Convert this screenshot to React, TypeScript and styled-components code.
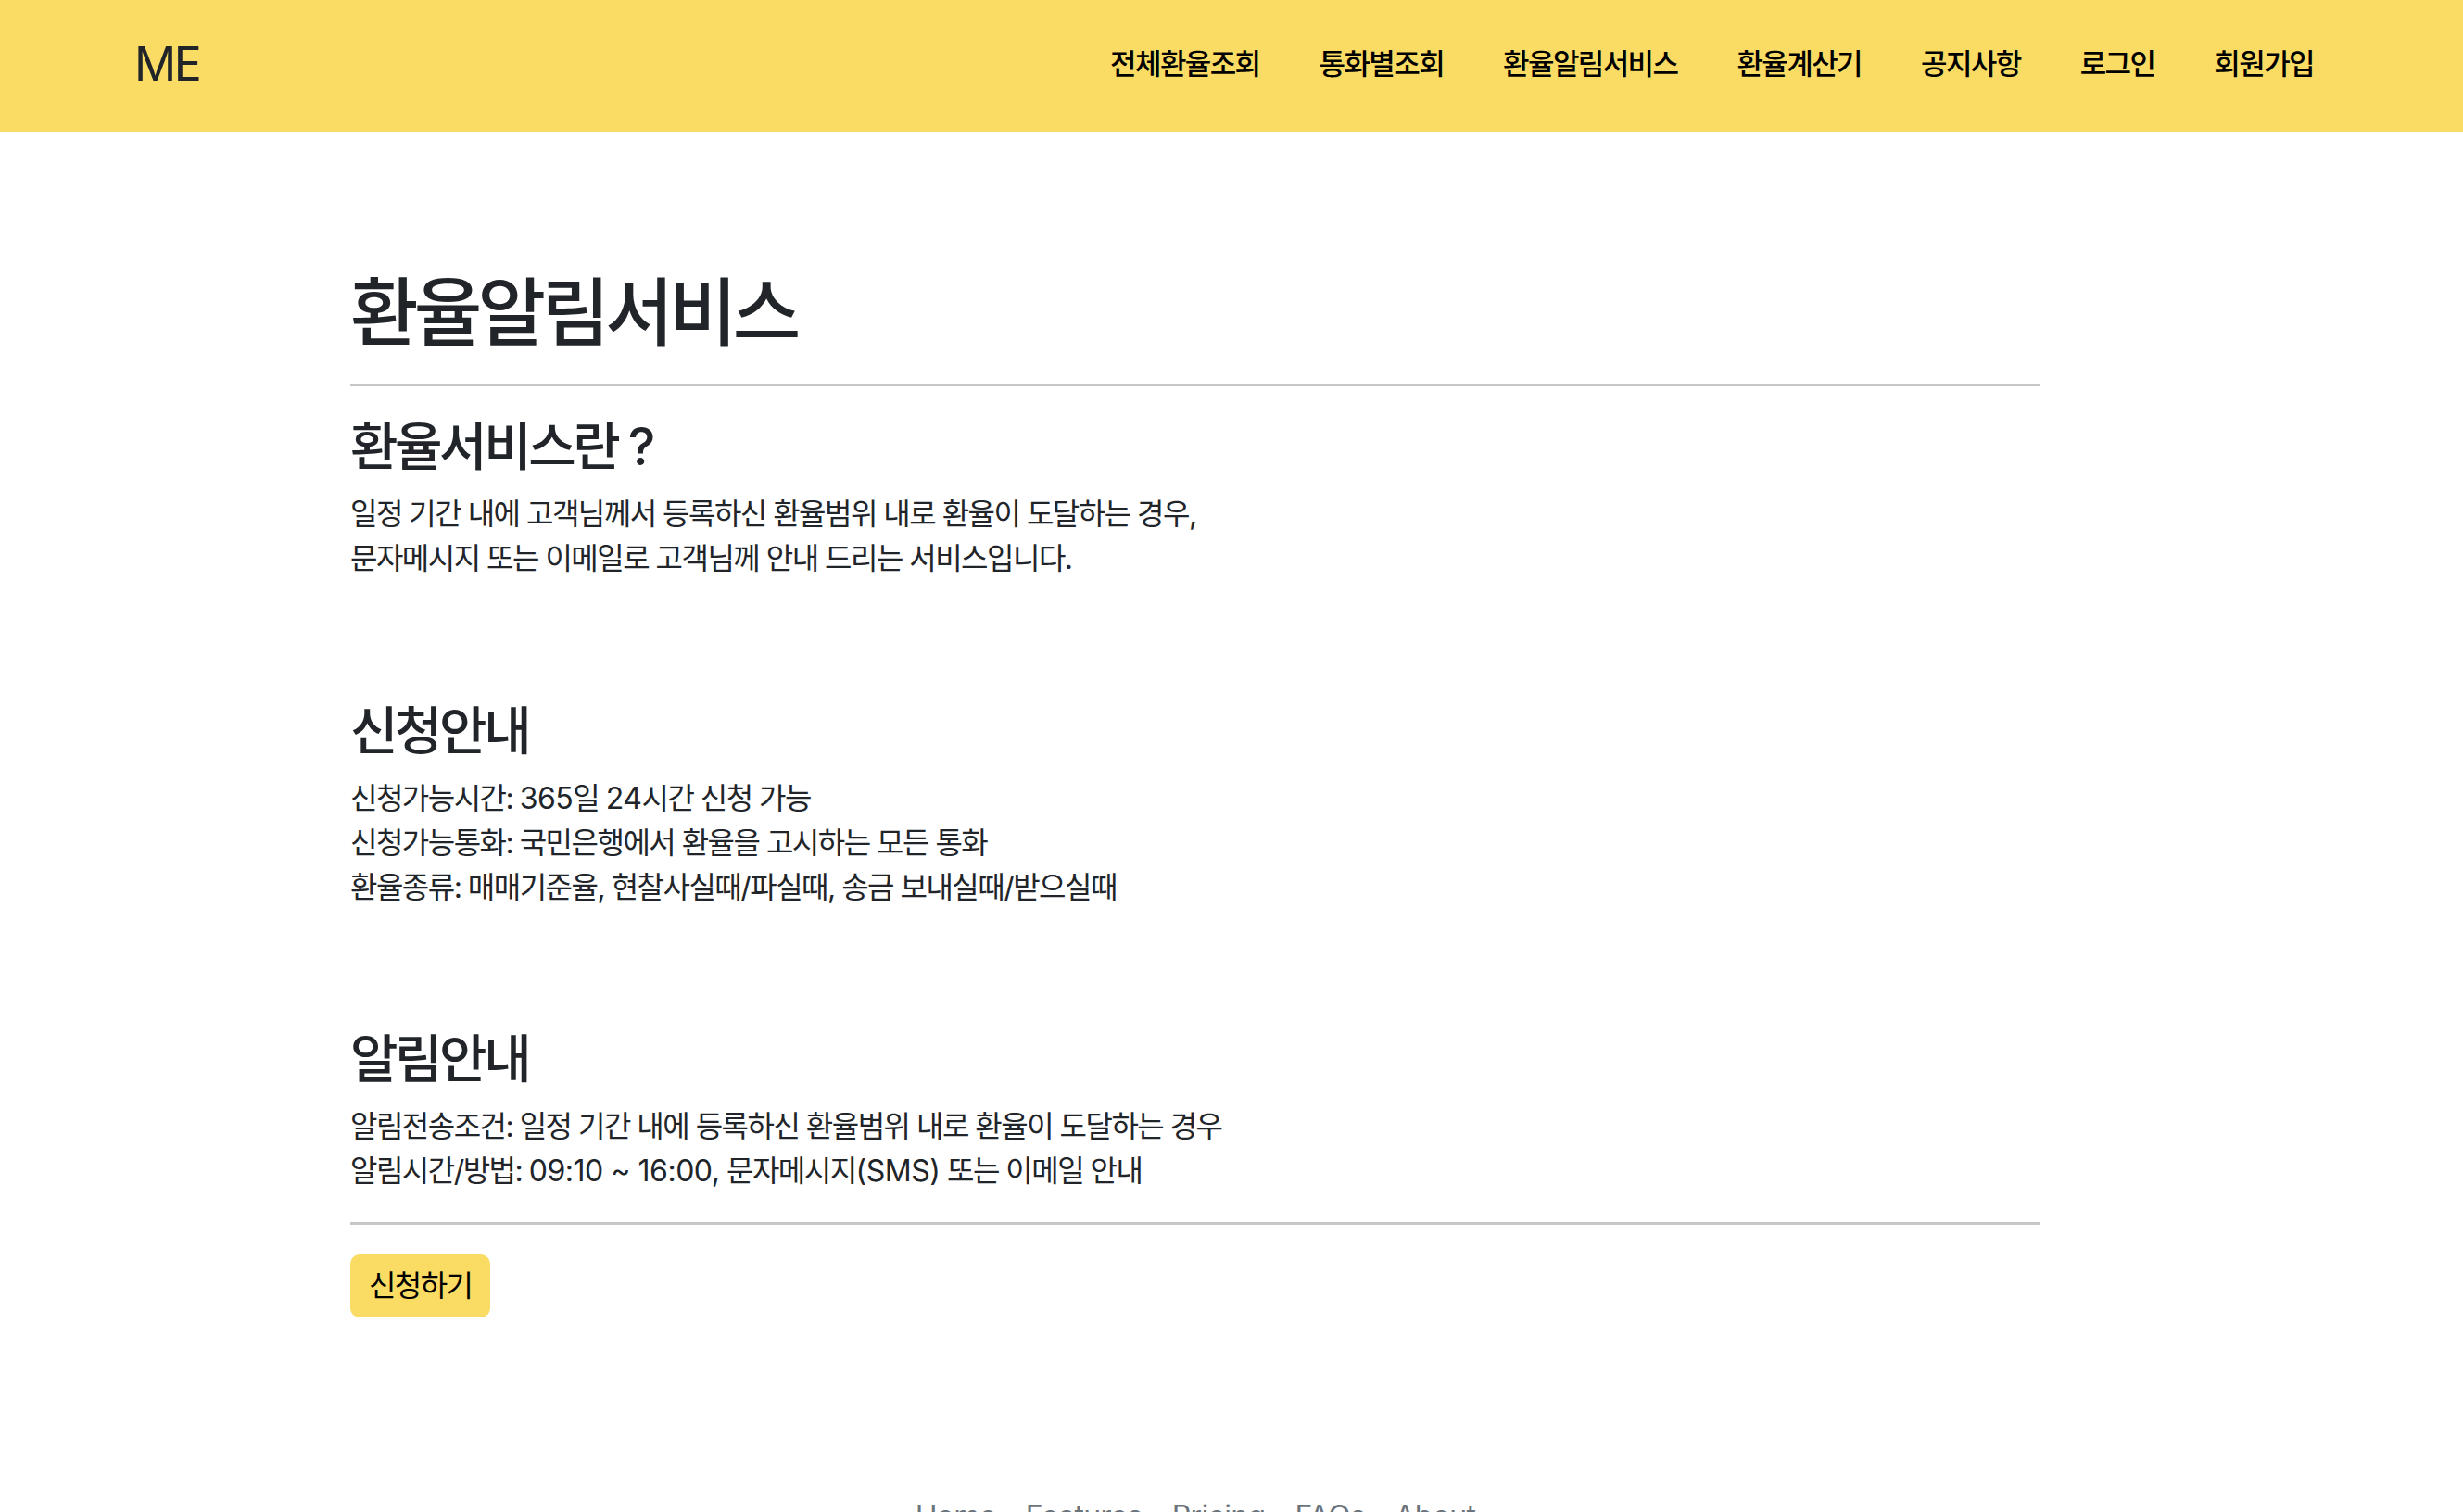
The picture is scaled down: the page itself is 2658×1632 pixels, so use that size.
import { createGlobalStyle } from "styled-components";
import styled from "styled-components";

const GlobalStyle = createGlobalStyle`
  html, body {
    margin: 0;
    padding: 0;
    height: 1632px;
    overflow: hidden;
    background: #ffffff;
  }
  body {
    font-family: Inter, "Noto Sans CJK KR", sans-serif;
    font-size: 32px;
    line-height: 48px;
    color: #212529;
  }
`;

const Header = styled.header`
  height: 142px;
  padding: 0 161px 4px 145px;
  box-sizing: border-box;
  background: #fadc64;
  display: flex;
  align-items: center;
  justify-content: space-between;
`;

const Brand = styled.a`
  font-size: 50px;
  font-weight: 400;
  letter-spacing: -0.05em;
  color: #212529;
`;

const NavList = styled.nav`
  display: flex;
  gap: 64px;
`;

const NavLink = styled.a`
  font-size: 31px;
  font-weight: 500;
  letter-spacing: -0.052em;
  color: #000000;
`;

const Main = styled.main`
  width: 1824px;
  margin-left: 378px;
  padding-top: 145px;
`;

const Title = styled.h1`
  margin: 0;
  font-size: 80px;
  line-height: 100px;
  font-weight: 500;
  letter-spacing: -0.06em;
`;

const Rule = styled.hr<{ $gap: number }>`
  margin: ${({ $gap }) => $gap}px 0 0;
  border: 0;
  border-top: 3px solid #c8c8c8;
`;

const Section = styled.section<{ $gap: number }>`
  margin-top: ${({ $gap }) => $gap}px;
`;

const Heading = styled.h3`
  margin: 0 0 15px;
  font-size: 56px;
  line-height: 67px;
  font-weight: 500;
  letter-spacing: -0.062em;
`;

const Line = styled.p`
  margin: 0;
  letter-spacing: -0.0475em;
`;

const Latin = styled.span`
  letter-spacing: -0.015em;
`;

const ApplyButton = styled.button`
  display: block;
  margin-top: 32px;
  padding: 10px 20px;
  border: 0;
  border-radius: 10px;
  background: #fadc64;
  color: #000000;
  font: inherit;
  letter-spacing: -0.05em;
`;

const Footer = styled.footer`
  width: 1824px;
  margin: 191px 0 0 378px;
  display: flex;
  justify-content: center;
  gap: 32px;
  color: #6c757d;
  letter-spacing: -0.02em;
`;

const navItems = ["전체환율조회", "통화별조회", "환율알림서비스", "환율계산기", "공지사항", "로그인", "회원가입"];
const footerItems = ["Home", "Features", "Pricing", "FAQs", "About"];

export default function App() {
  return (
    <>
      <GlobalStyle />
      <Header>
        <Brand>ME</Brand>
        <NavList>
          {navItems.map((item) => (
            <NavLink key={item}>{item}</NavLink>
          ))}
        </NavList>
      </Header>
      <Main>
        <Title>환율알림서비스</Title>
        <Rule $gap={27} />
        <Section $gap={32}>
          <Heading>환율서비스란 ?</Heading>
          <Line>일정 기간 내에 고객님께서 등록하신 환율범위 내로 환율이 도달하는 경우,</Line>
          <Line>문자메시지 또는 이메일로 고객님께 안내 드리는 서비스입니다.</Line>
        </Section>
        <Section $gap={129}>
          <Heading>신청안내</Heading>
          <Line>신청가능시간: <Latin>365</Latin>일 <Latin>24</Latin>시간 신청 가능</Line>
          <Line>신청가능통화: 국민은행에서 환율을 고시하는 모든 통화</Line>
          <Line>환율종류: 매매기준율, 현찰사실때/파실때, 송금 보내실때/받으실때</Line>
        </Section>
        <Section $gap={128}>
          <Heading>알림안내</Heading>
          <Line>알림전송조건: 일정 기간 내에 등록하신 환율범위 내로 환율이 도달하는 경우</Line>
          <Line>알림시간/방법: <Latin>09:10 ~ 16:00,</Latin> 문자메시지<Latin>(SMS)</Latin> 또는 이메일 안내</Line>
        </Section>
        <Rule $gap={31} />
        <ApplyButton>신청하기</ApplyButton>
      </Main>
      <Footer>
        {footerItems.map((item) => (
          <span key={item}>{item}</span>
        ))}
      </Footer>
    </>
  );
}
